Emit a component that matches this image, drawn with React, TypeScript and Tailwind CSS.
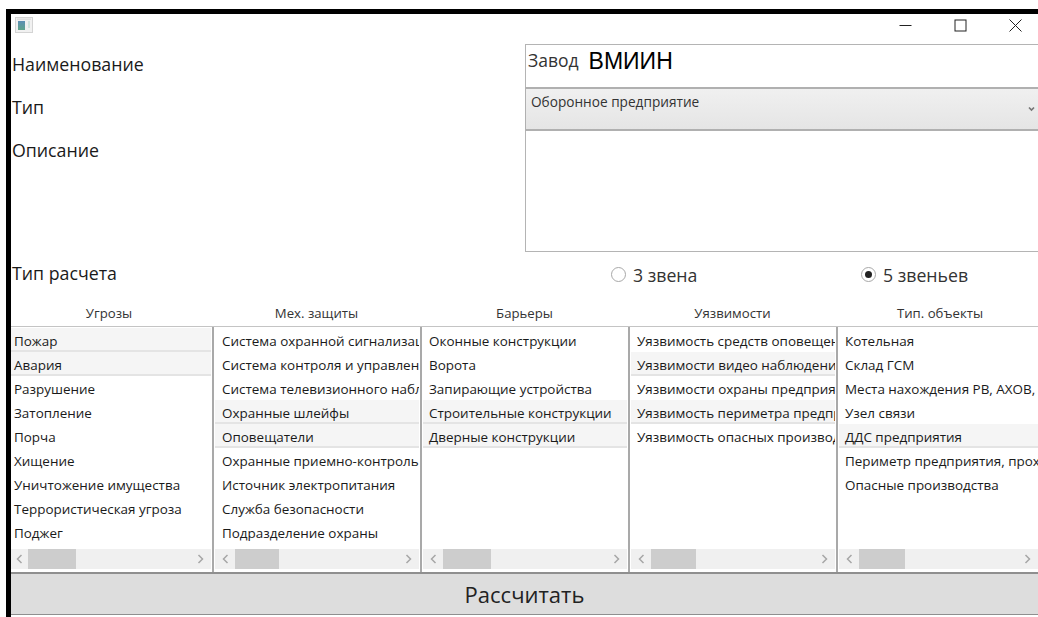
const threats = ['Пожар', 'Авария', 'Разрушение', 'Затопление', 'Порча', 'Хищение', 'Уничтожение имущества', 'Террористическая угроза', 'Поджег']
const guards = ['Система охранной сигнализации', 'Система контроля и управления доступом', 'Система телевизионного наблюдения', 'Охранные шлейфы', 'Оповещатели', 'Охранные приемно-контрольные приборы', 'Источник электропитания', 'Служба безопасности', 'Подразделение охраны']
const barriers = ['Оконные конструкции', 'Ворота', 'Запирающие устройства', 'Строительные конструкции', 'Дверные конструкции']
const weaknesses = ['Уязвимость средств оповещения', 'Уязвимости видео наблюдения', 'Уязвимости охраны предприятия', 'Уязвимость периметра предприятия', 'Уязвимость опасных производств']
const objects = ['Котельная', 'Склад ГСМ', 'Места нахождения РВ, АХОВ, ВВ', 'Узел связи', 'ДДС предприятия', 'Периметр предприятия, проходные', 'Опасные производства']

interface ListColumnProps {
  items: string[]
  selected: number[]
  className: string
  rowPad: string
  arrowWidth: string
  thumb: string
}

function ListColumn({ items, selected, className, rowPad, arrowWidth, thumb }: ListColumnProps) {
  return (
    <div className={`flex flex-col min-w-0 pb-[3px] ${className}`}>
      <div className="flex-1 pt-[1px] overflow-hidden">
        {items.map((item, i) => (
          <div
            key={item}
            className={`h-6 pt-[5px] border-b-2 text-[13.45px] leading-[17px] whitespace-nowrap overflow-hidden ${rowPad} ${
              selected.includes(i) ? 'bg-[#f5f5f5] border-[#e4e4e4]' : 'border-transparent'
            }`}
          >
            {item}
          </div>
        ))}
      </div>
      {/* Horizontal scrollbar */}
      <div className="h-5 bg-[#f0f0f0] flex items-center text-[#a6a6a6]">
        <div className={`flex justify-center ${arrowWidth}`}>
          <svg width="7" height="10" viewBox="0 0 7 10" fill="none" stroke="currentColor" strokeWidth="1.5">
            <polyline points="5.5 1 1.5 5 5.5 9" />
          </svg>
        </div>
        <div className={`h-full bg-[#cdcdcd] ${thumb}`} />
        <div className="flex-1" />
        <div className="w-[21px] flex justify-center">
          <svg width="7" height="10" viewBox="0 0 7 10" fill="none" stroke="currentColor" strokeWidth="1.5">
            <polyline points="1.5 1 5.5 5 1.5 9" />
          </svg>
        </div>
      </div>
    </div>
  )
}

export default function App() {
  return (
    <div className="w-[1038px] h-[617px] overflow-hidden bg-white pl-[6px] pt-[9px] text-[#1a1a1a] font-['Open_Sans','Noto_Sans',sans-serif]">
      <div className="h-full flex flex-col border-l-[5px] border-t-[5px] border-black">
        {/* Title bar */}
        <div className="h-[30px] flex items-center justify-between shrink-0">
          <svg className="ml-[4px] mb-[9px]" width="18" height="16" viewBox="0 0 18 16">
            <defs>
              <linearGradient id="appIcon" x1="0" y1="0" x2="0" y2="1">
                <stop offset="0" stopColor="#5d8fb5" />
                <stop offset="1" stopColor="#5fa48a" />
              </linearGradient>
            </defs>
            <rect x="0.5" y="0.5" width="17" height="15" fill="#f1f1f1" stroke="#d4d4d4" />
            <rect x="2" y="1.5" width="14" height="1.5" fill="#e0e0e0" />
            <rect x="3" y="4" width="7" height="9" fill="url(#appIcon)" />
            <rect x="13" y="4" width="2" height="7" fill="#d3e4de" />
          </svg>
          <div className="flex items-center gap-[42px] pr-[16px] mb-[8px]">
            <svg width="13" height="13" viewBox="0 0 13 13" stroke="#222" fill="none">
              <line x1="0.5" y1="6.5" x2="12.5" y2="6.5" />
            </svg>
            <svg width="13" height="13" viewBox="0 0 13 13" stroke="#222" fill="none">
              <rect x="1" y="1" width="11" height="11" />
            </svg>
            <svg width="13" height="13" viewBox="0 0 13 13" stroke="#222" fill="none">
              <path d="M0.5 0.5 L12.5 12.5 M12.5 0.5 L0.5 12.5" />
            </svg>
          </div>
        </div>

        {/* Form fields */}
        <div className="flex h-[259px] shrink-0">
          <div className="w-[514px] shrink-0 flex flex-col pl-[1px] text-[17.75px] leading-6">
            <div className="h-[43px] pt-[8px]">Наименование</div>
            <div className="h-[43px] pt-[8px]">Тип</div>
            <div className="h-[123px] pt-[8px]">Описание</div>
            <div className="pt-[8px]">Тип расчета</div>
          </div>
          <div className="flex-1 flex flex-col min-w-0">
            <div className="h-[43px] border-[1.5px] border-b-0 border-r-0 border-[#b4b4b4] flex items-start pl-[2px] pt-[1px]">
              <span className="text-[17.5px] leading-[28px] text-[#333]">Завод</span>
              <span className="ml-[10px] text-[23px] leading-[31px] text-black font-['Liberation_Sans',sans-serif]">ВМИИН</span>
            </div>
            <div className="h-[44px] border-y-2 border-l-[1.5px] border-[#b0b0b0] bg-gradient-to-b from-[#f0f0f0] to-[#e5e5e5] flex justify-between pl-[5px] pr-[3px]">
              <span className="text-[13.65px] leading-[26px] text-[#333]">Оборонное предприятие</span>
              <svg className="mt-[17px]" width="7" height="6" viewBox="0 0 7 6" fill="none" stroke="#777" strokeWidth="1.7">
                <polyline points="1 1.5 3.5 4 6 1.5" />
              </svg>
            </div>
            <div className="h-[121px] border border-r-0 border-t-0 border-[#b4b4b4]" />
            <div className="flex-1 flex items-center text-[17.7px] text-[#333] pb-[5px]">
              <div className="ml-[86px] w-[250px] flex items-center">
                <span className="w-[15px] h-[15px] rounded-full border border-[#a8a8a8] mr-[7px]" />
                3 звена
              </div>
              <div className="flex items-center">
                <span className="w-[15px] h-[15px] rounded-full border border-[#a8a8a8] mr-[7px] flex items-center justify-center">
                  <span className="w-[7px] h-[7px] rounded-full bg-[#222]" />
                </span>
                5 звеньев
              </div>
            </div>
          </div>
        </div>

        {/* Column captions */}
        <div className="h-[24px] shrink-0 flex text-[13.2px] leading-[20px] text-center text-[#333] border-b-[1.5px] border-[#c4c4c4]">
          <div className="w-[196px]">Угрозы</div>
          <div className="w-[219px]">Мех. защиты</div>
          <div className="w-[197px]">Барьеры</div>
          <div className="w-[219px]">Уязвимости</div>
          <div className="flex-1">Тип. объекты</div>
        </div>

        {/* Reference lists */}
        <div className="h-[245px] shrink-0 flex">
          <ListColumn className="w-[201px] pr-[1px]" rowPad="pl-[3px]" arrowWidth="w-[17px]" items={threats} selected={[0, 1]} thumb="w-[48px]" />
          <ListColumn className="w-[208px] border-l-2 border-[#a9a9a9] px-[1px]" rowPad="pl-[7px]" arrowWidth="w-5" items={guards} selected={[3, 4]} thumb="w-[44px]" />
          <ListColumn className="w-[208px] border-l-2 border-[#a9a9a9] px-[1px]" rowPad="pl-[6px]" arrowWidth="w-5" items={barriers} selected={[3, 4]} thumb="w-[48px]" />
          <ListColumn className="w-[208px] border-l-2 border-[#a9a9a9] px-[1px]" rowPad="pl-[6px]" arrowWidth="w-5" items={weaknesses} selected={[1, 3]} thumb="w-[45px]" />
          <ListColumn className="flex-1 border-l-2 border-[#a9a9a9] pl-[1px]" rowPad="pl-[6px]" arrowWidth="w-5" items={objects} selected={[4]} thumb="w-[46px]" />
        </div>

        {/* Calculate button */}
        <div className="h-[43px] shrink-0 bg-[#dddddd] border-t-2 border-b-[1.5px] border-[#8f8f8f] text-center text-[22px] leading-[40px] text-[#222]">
          Рассчитать
        </div>
      </div>
    </div>
  )
}
